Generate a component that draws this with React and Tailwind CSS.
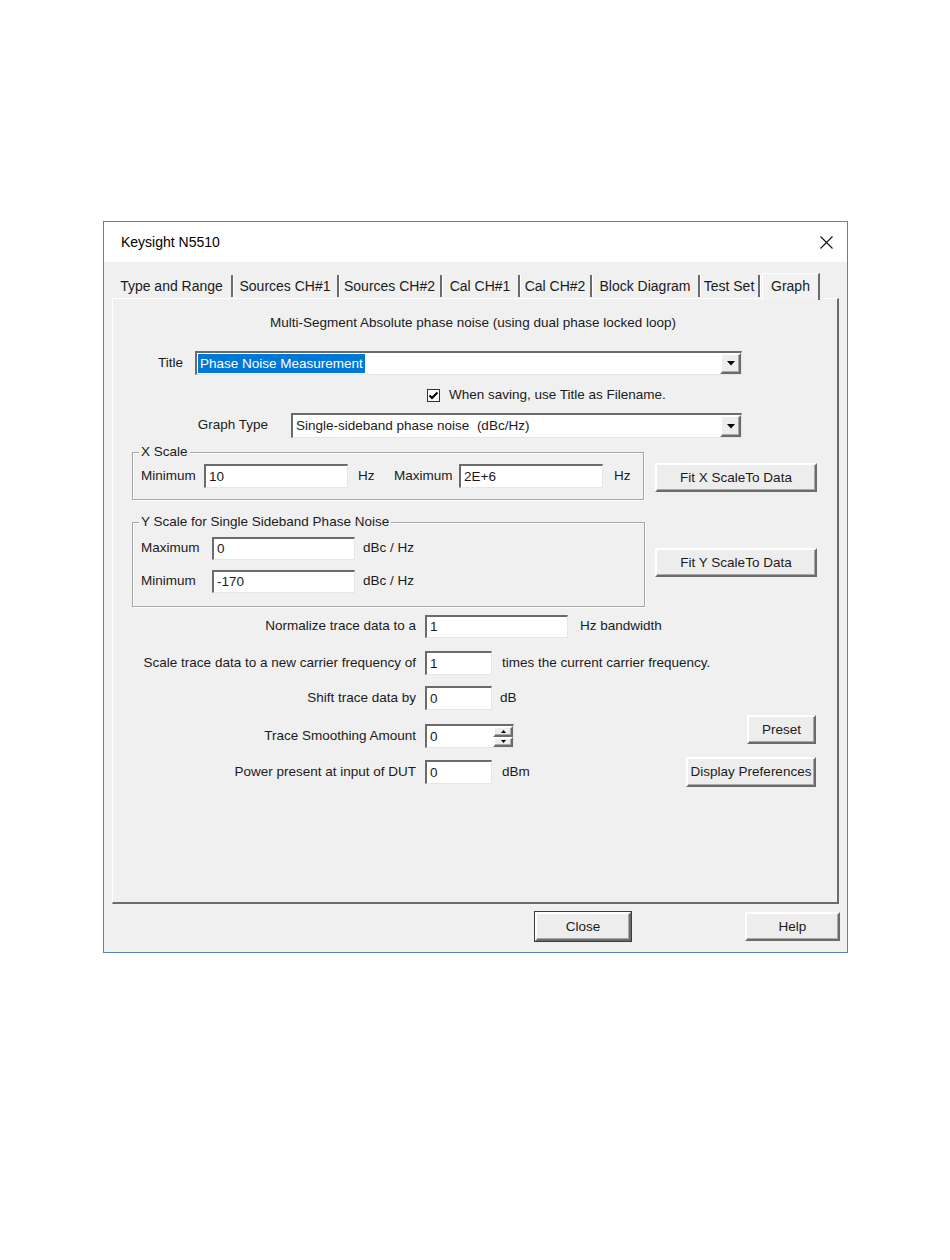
import React from "react";

const sunken =
  "bg-white border-t-2 border-l-2 border-b border-r border-t-[#6b6b6b] border-l-[#6b6b6b] border-b-[#e6e6e6] border-r-[#e6e6e6]";
const raised =
  "bg-[#ededed] border-2 border-t-white border-l-white border-b-[#6b6b6b] border-r-[#6b6b6b] shadow-[inset_-1px_-1px_0_#a9a9a9]";

const tabs = [
  { label: "Type and Range", w: "w-[121px]" },
  { label: "Sources CH#1", w: "w-[106px]" },
  { label: "Sources CH#2", w: "w-[103px]" },
  { label: "Cal CH#1", w: "w-[78px]" },
  { label: "Cal CH#2", w: "w-[72px]" },
  { label: "Block Diagram", w: "w-[108px]" },
  { label: "Test Set", w: "w-[60px]" },
];

function Field({ value, className }) {
  return (
    <div className={`${sunken} ${className} flex items-center pl-[3px] text-[13.5px] leading-none`}>
      {value}
    </div>
  );
}

function Button({ children, className }) {
  return (
    <div className={`${raised} ${className} flex items-center justify-center text-[13.5px] leading-none`}>
      {children}
    </div>
  );
}

function DropArrow() {
  return (
    <div className={`${raised} w-[21px] h-full flex items-center justify-center`}>
      <svg width="8" height="5" viewBox="0 0 8 5">
        <path d="M0 0 H8 L4 4.5 Z" fill="#000" />
      </svg>
    </div>
  );
}

function Combo({ className, children }) {
  return (
    <div className={`${sunken} ${className} flex items-stretch`}>
      <div className="flex-1 flex items-center pl-[1px] text-[13.5px] leading-none">{children}</div>
      <DropArrow />
    </div>
  );
}

function Group({ title, className, children }) {
  return (
    <div
      className={`relative border border-[#a6a6a6] shadow-[inset_1px_1px_0_#ffffff,1px_1px_0_#ffffff] ${className}`}
    >
      <span className="absolute -top-[9px] left-[6px] bg-[#f0f0f0] px-[2px] text-[13.5px] leading-[16px]">
        {title}
      </span>
      {children}
    </div>
  );
}

export default function App() {
  return (
    <div className="min-h-[1260px] bg-white pt-[221px] pl-[103px] font-['Liberation_Sans',Arial,sans-serif] text-[#1b1b1b]">
      <div className="w-[745px] h-[732px] border border-[#5682b4] bg-[#f0f0f0] flex flex-col">
        {/* title bar */}
        <div className="h-[40px] bg-white flex items-center justify-between pl-[17px] pr-[14px]">
          <span className="text-[14px] text-black">Keysight N5510</span>
          <svg width="13" height="13" viewBox="0 0 13 13">
            <path d="M0.5 0.5 L12.5 12.5 M12.5 0.5 L0.5 12.5" stroke="#111" strokeWidth="1.1" />
          </svg>
        </div>

        <div className="flex-1 pl-[8px] pr-[6px] flex flex-col">
          {/* tabs */}
          <div className="h-[36px] flex items-end">
            {tabs.map((t) => (
              <div
                key={t.label}
                className={`${t.w} h-[22px] flex items-center justify-center text-[14px] border-r-2 border-r-[#6b6b6b] shadow-[1px_0_0_#ffffff] mb-[1px]`}
              >
                {t.label}
              </div>
            ))}
            <div className="relative z-10 ml-[2px] w-[58px] h-[27px] -mb-[2px] bg-[#f2f2f2] border-t border-l border-t-white border-l-white border-r-2 border-r-[#6b6b6b] flex justify-center pt-[2px] text-[14px]">
              Graph
            </div>
          </div>

          {/* tab panel */}
          <div className="w-[727px] h-[606px] border-t border-l border-t-white border-l-white border-r-2 border-b-2 border-r-[#6b6b6b] border-b-[#6b6b6b] flex flex-col text-[13.5px]">
            <div className="mt-[16px] h-[16px] leading-[16px] text-center pr-[4px]">
              Multi-Segment Absolute phase noise (using dual phase locked loop)
            </div>

            <div className="mt-[20px] flex items-center h-[24px]">
              <span className="w-[70px] text-right">Title</span>
              <Combo className="ml-[12px] w-[547px] h-[24px]">
                <span className="bg-[#0078d7] text-white px-[2px] py-[3px]">Phase Noise Measurement</span>
              </Combo>
            </div>

            <div className="mt-[12px] h-[16px] flex items-center">
              <div className="ml-[314px] w-[13px] h-[13px] bg-white border border-[#333] flex items-center justify-center">
                <svg width="11" height="11" viewBox="0 0 11 11">
                  <path d="M1.5 5.5 L4 8 L9.5 2.5" stroke="#000" strokeWidth="2" fill="none" />
                </svg>
              </div>
              <span className="ml-[9px]">When saving, use Title as Filename.</span>
            </div>

            <div className="mt-[10px] flex items-center h-[25px]">
              <span className="w-[155px] text-right">Graph Type</span>
              <Combo className="ml-[23px] w-[451px] h-[25px]">
                <span className="pl-[2px] whitespace-pre">Single-sideband phase noise  (dBc/Hz)</span>
              </Combo>
            </div>

            {/* X scale */}
            <div className="mt-[14px] flex items-start">
              <Group title="X Scale" className="ml-[19px] w-[512px] h-[48px]">
                <div className="pt-[11px] pl-[8px] flex items-center">
                  <span className="w-[63px]">Minimum</span>
                  <Field value="10" className="w-[144px] h-[24px]" />
                  <span className="ml-[10px] w-[36px]">Hz</span>
                  <span className="w-[65px]">Maximum</span>
                  <Field value="2E+6" className="w-[144px] h-[24px]" />
                  <span className="ml-[11px]">Hz</span>
                </div>
              </Group>
              <Button className="ml-[11px] mt-[11px] w-[162px] h-[29px]">Fit X ScaleTo Data</Button>
            </div>

            {/* Y scale */}
            <div className="mt-[22px] flex items-start">
              <Group title="Y Scale for Single Sideband Phase Noise" className="ml-[19px] w-[513px] h-[85px]">
                <div className="pt-[14px] pl-[8px] flex flex-col gap-[10px]">
                  <div className="flex items-center">
                    <span className="w-[71px]">Maximum</span>
                    <Field value="0" className="w-[143px] h-[23px]" />
                    <span className="ml-[8px]">dBc / Hz</span>
                  </div>
                  <div className="flex items-center">
                    <span className="w-[71px]">Minimum</span>
                    <Field value="-170" className="w-[143px] h-[23px]" />
                    <span className="ml-[8px]">dBc / Hz</span>
                  </div>
                </div>
              </Group>
              <Button className="ml-[10px] mt-[26px] w-[162px] h-[29px]">Fit Y ScaleTo Data</Button>
            </div>

            <div className="mt-[8px] flex items-center">
              <span className="w-[303px] text-right">Normalize trace data to a</span>
              <Field value="1" className="ml-[9px] w-[143px] h-[23px]" />
              <span className="ml-[12px]">Hz bandwidth</span>
            </div>

            <div className="mt-[13px] flex items-center">
              <span className="w-[303px] text-right">Scale trace data to a new carrier frequency of</span>
              <Field value="1" className="ml-[9px] w-[67px] h-[24px]" />
              <span className="ml-[10px]">times the current carrier frequency.</span>
            </div>

            <div className="mt-[11px] flex items-center">
              <span className="w-[303px] text-right">Shift trace data by</span>
              <Field value="0" className="ml-[9px] w-[67px] h-[24px]" />
              <span className="ml-[8px]">dB</span>
            </div>

            <div className="mt-[5px] flex items-start">
              <div className="mt-[9px] flex items-center">
                <span className="w-[303px] text-right">Trace Smoothing Amount</span>
                <div className={`${sunken} ml-[9px] w-[89px] h-[24px] flex items-stretch`}>
                  <div className="flex-1 flex items-center pl-[3px] leading-none">0</div>
                  <div className="w-[20px] flex flex-col">
                    <div className={`${raised} flex-1 flex items-center justify-center`}>
                      <svg width="5" height="3" viewBox="0 0 5 3">
                        <path d="M0 3 H5 L2.5 0 Z" fill="#000" />
                      </svg>
                    </div>
                    <div className={`${raised} flex-1 flex items-center justify-center`}>
                      <svg width="5" height="3" viewBox="0 0 5 3">
                        <path d="M0 0 H5 L2.5 3 Z" fill="#000" />
                      </svg>
                    </div>
                  </div>
                </div>
              </div>
              <Button className="ml-auto mr-[21px] w-[69px] h-[29px]">Preset</Button>
            </div>

            <div className="mt-[9px] flex items-start">
              <div className="mt-[3px] flex items-center">
                <span className="w-[303px] text-right">Power present at input of DUT</span>
                <Field value="0" className="ml-[9px] w-[67px] h-[24px]" />
                <span className="ml-[10px]">dBm</span>
              </div>
              <Button className="ml-auto mr-[21px] w-[130px] h-[30px]">Display Preferences</Button>
            </div>
          </div>

          {/* footer buttons */}
          <div className="mt-[8px] flex justify-end pr-[1px] gap-[114px]">
            <Button className="w-[96px] h-[29px] outline outline-1 outline-[#3c3c3c]">Close</Button>
            <Button className="w-[95px] h-[29px]">Help</Button>
          </div>
        </div>
      </div>
    </div>
  );
}
